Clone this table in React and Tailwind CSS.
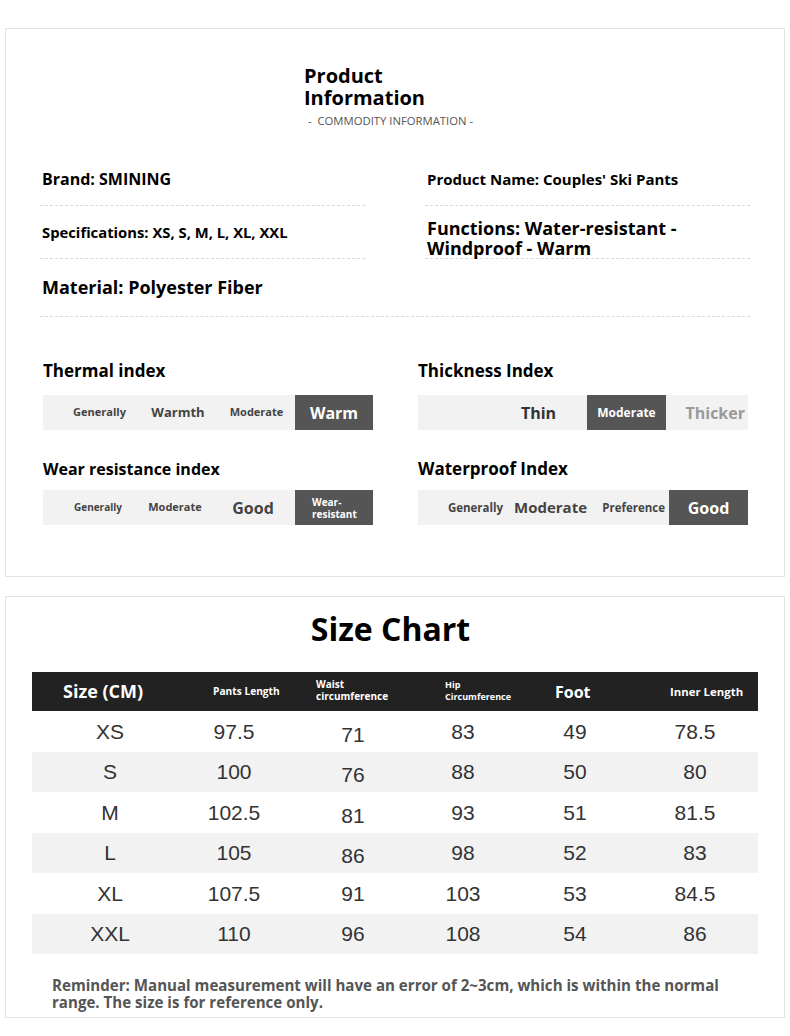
const SANS = "font-['Open_Sans','Noto_Sans',sans-serif]";

const BARS = [
  {
    title: "Thermal index",
    titleCls: "text-[17px]",
    barCls: "mt-[13px]",
    items: [
      { cls: "w-[18px]" },
      { cls: "w-[77px] text-[11px] text-[#444]", label: "Generally" },
      { cls: "w-[80px] text-[13px] text-[#444]", label: "Warmth" },
      { cls: "w-[77px] text-[11px] text-[#444]", label: "Moderate" },
      { cls: "w-[78px] text-[16px] text-white bg-[#555]", label: "Warm" },
    ],
  },
  {
    title: "Thickness Index",
    titleCls: "text-[17px]",
    barCls: "mt-[13px]",
    items: [
      { cls: "w-[72px]" },
      { cls: "w-[97px] text-[16px] text-[#333]", label: "Thin" },
      { cls: "w-[79px] text-[12px] text-white bg-[#555]", label: "Moderate" },
      { cls: "w-[82px] text-[16px] text-[#9a9a9a] justify-end pr-[3px]", label: "Thicker" },
    ],
  },
  {
    title: "Wear resistance index",
    titleCls: "text-[16px]",
    barCls: "mt-[10px]",
    items: [
      { cls: "w-[18px]" },
      { cls: "w-[74px] text-[10px] text-[#444]", label: "Generally" },
      { cls: "w-[80px] text-[11px] text-[#444]", label: "Moderate" },
      { cls: "w-[76px] text-[16px] text-[#444]", label: "Good" },
      { cls: "w-[4px]" },
      { cls: "w-[78px] text-[10px] leading-[12px] text-white bg-[#555] justify-start pl-[17px]", label: "Wear-\nresistant" },
    ],
  },
  {
    title: "Waterproof Index",
    titleCls: "text-[17px]",
    barCls: "mt-[10px]",
    items: [
      { cls: "w-[22px]" },
      { cls: "w-[71px] text-[11.5px] text-[#444]", label: "Generally" },
      { cls: "w-[79px] text-[15px] text-[#444]", label: "Moderate" },
      { cls: "w-[79px] text-[11.5px] text-[#444] justify-end pr-[4px]", label: "Preference" },
      { cls: "w-[79px] text-[16px] text-white bg-[#555]", label: "Good" },
    ],
  },
];

const SIZES = [
  ["XS", "97.5", "71", "83", "49", "78.5"],
  ["S", "100", "76", "88", "50", "80"],
  ["M", "102.5", "81", "93", "51", "81.5"],
  ["L", "105", "86", "98", "52", "83"],
  ["XL", "107.5", "91", "103", "53", "84.5"],
  ["XXL", "110", "96", "108", "54", "86"],
];

function IndexBar({ title, titleCls, barCls, items }) {
  return (
    <div>
      <h4 className={`${SANS} font-bold leading-[22px] text-black ${titleCls}`}>{title}</h4>
      <div className={`h-[35px] flex bg-[#f2f2f2] ${barCls}`}>
        {items.map((it, i) => (
          <div
            key={i}
            className={`flex items-center justify-center font-bold whitespace-pre-line ${SANS} ${it.cls}`}
          >
            {it.label}
          </div>
        ))}
      </div>
    </div>
  );
}

export default function App() {
  return (
    <div className={`${SANS} bg-white min-h-[1036px] pt-[28px] px-[5px]`}>

      {/* ── Product information ── */}
      <div className="border border-[#e3e3e3] pt-[36px] pb-[51px]">
        <div className="w-[182px] mx-auto">
          <h2 className="font-bold text-[20px] leading-[22px] text-black">
            Product
            <br />
            Information
          </h2>
        </div>
        <p className="mt-[5px] pr-[9px] text-center text-[11.3px] leading-[14px] text-[#555]">
          -&nbsp; COMMODITY INFORMATION -
        </p>

        <div className="mt-[25px] ml-[34px] w-[710px] grid grid-cols-[325px_325px] gap-x-[60px] font-bold text-black">
          <div className="h-[53px] flex items-center pl-[2px] border-b border-dashed border-[#dadada] text-[16px]">
            Brand: SMINING
          </div>
          <div className="h-[53px] flex items-center pl-[2px] border-b border-dashed border-[#dadada] text-[15px]">
            Product Name: Couples' Ski Pants
          </div>
          <div className="h-[53px] flex items-center pl-[2px] border-b border-dashed border-[#dadada] text-[14.8px]">
            Specifications: XS, S, M, L, XL, XXL
          </div>
          <div className="h-[53px] flex items-end pl-[2px] border-b border-dashed border-[#dadada] text-[18px] leading-[20px]">
            <span>
              Functions: Water-resistant -<br />Windproof - Warm
            </span>
          </div>
          <div className="col-span-2 h-[58px] flex items-center pl-[2px] border-b border-dashed border-[#dadada] text-[18px]">
            Material: Polyester Fiber
          </div>
        </div>

        <div className="mt-[43px] ml-[37px] w-[705px] grid grid-cols-[330px_330px] gap-x-[45px] gap-y-[28px]">
          {BARS.map((b) => (
            <IndexBar key={b.title} {...b} />
          ))}
        </div>
      </div>

      {/* ── Size chart ── */}
      <div className="mt-[19px] border border-[#e3e3e3] pt-[12px] pb-[6px] px-[26px]">
        <h2 className="font-bold text-[32px] leading-[40px] text-center pr-[9px] text-black">Size Chart</h2>

        <div className="mt-[23px]">
          <div className="h-[39px] bg-[#222] text-white font-bold pl-[31px] grid grid-cols-[150px_103px_129px_110px_115px_1fr] items-center">
            <span className="text-[18px]">Size (CM)</span>
            <span className="text-[10.2px]">Pants Length</span>
            <span className="text-[10px] leading-[12px] -mt-[3px]">Waist<br />circumference</span>
            <span className="text-[9px] leading-[12px] -mt-[1px]">Hip<br />Circumference</span>
            <span className="text-[16px]">Foot</span>
            <span className="text-[11.4px]">Inner Length</span>
          </div>

          {SIZES.map((row, i) => (
            <div
              key={row[0]}
              className={`grid grid-cols-[156px_92px_146px_74px_150px_90px] items-center font-['Liberation_Sans',Arial,sans-serif] text-[21px] text-[#333] ${
                i % 2 === 1 ? "bg-[#f2f2f2] h-[40px]" : "h-[41px]"
              }`}
            >
              {row.map((v, j) => (
                <span key={j} className={`text-center ${j === 2 && i < 4 ? "pt-[6px]" : ""}`}>
                  {v}
                </span>
              ))}
            </div>
          ))}
        </div>

        <p className="mt-[23px] ml-[20px] w-[690px] text-[15.1px] leading-[17px] font-bold text-[#555]">
          Reminder: Manual measurement will have an error of 2~3cm, which is within the normal range. The size is for reference only.
        </p>
      </div>
    </div>
  );
}
